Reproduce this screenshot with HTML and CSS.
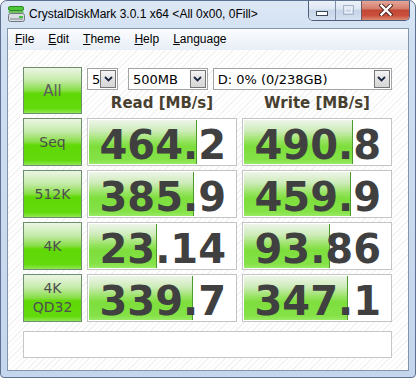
FILE: index.html
```html
<!DOCTYPE html>
<html lang="en">
<head>
  <meta charset="UTF-8" />
  <meta name="viewport" content="width=device-width, initial-scale=1.0" />
  <title>CrystalDiskMark 3.0.1 x64</title>
  <link rel="stylesheet" href="styles.css">
</head>
<body>
  <div class="window">
    <div class="titlebar">
      <svg class="app-icon" width="17" height="18" viewBox="0 0 17 18">
        <rect x="0.5" y="1.5" width="15" height="4" rx="1.5" fill="#4cc63a" stroke="#2f8a25"/>
        <rect x="0.5" y="6" width="15" height="2" fill="#6fc060"/>
        <rect x="0.5" y="8.5" width="16" height="8" rx="2" fill="#d9dde2" stroke="#6f7880"/>
        <rect x="2" y="13" width="13" height="2" fill="#a9b1b9"/>
        <rect x="11" y="11" width="4" height="2" fill="#3cc43a"/>
      </svg>
      <span class="title">CrystalDiskMark 3.0.1 x64 &lt;All 0x00, 0Fill&gt;</span>
      <div class="controls">
        <div class="ctl ctl-min">
          <svg width="12" height="5" viewBox="0 0 12 5"><rect x="0.5" y="0.5" width="11" height="4" fill="#fff" stroke="#3b4658"/></svg>
        </div>
        <div class="ctl ctl-max">
          <svg width="11" height="10" viewBox="0 0 11 10"><rect x="0.5" y="0.5" width="10" height="9" fill="none" stroke="#a6b4c6"/><rect x="2.5" y="3" width="6" height="4.5" fill="none" stroke="#eef2f8"/></svg>
        </div>
        <div class="ctl ctl-close">
          <svg width="14" height="12" viewBox="0 0 14 12">
            <path d="M2.5 1.5 L11.5 10.5 M11.5 1.5 L2.5 10.5" stroke="#4a2320" stroke-width="4.2" stroke-linecap="square"/>
            <path d="M2.5 1.5 L11.5 10.5 M11.5 1.5 L2.5 10.5" stroke="#fff" stroke-width="2.4" stroke-linecap="square"/>
          </svg>
        </div>
      </div>
    </div>

    <div class="frame">
      <div class="menubar">
        <span class="menu"><u>F</u>ile</span>
        <span class="menu"><u>E</u>dit</span>
        <span class="menu"><u>T</u>heme</span>
        <span class="menu"><u>H</u>elp</span>
        <span class="menu"><u>L</u>anguage</span>
      </div>

      <div class="client">
        <div class="board">
          <div class="label label-all">All</div>
          <div class="head">
            <div class="combos">
              <div class="combo combo-count"><span>5</span><i class="arrow"><svg width="9" height="6" viewBox="0 0 9 6"><polyline points="1,1 4.5,4.5 8,1" fill="none" stroke="#1b2740" stroke-width="1.8"/></svg></i></div>
              <div class="combo combo-size"><span>500MB</span><i class="arrow"><svg width="9" height="6" viewBox="0 0 9 6"><polyline points="1,1 4.5,4.5 8,1" fill="none" stroke="#1b2740" stroke-width="1.8"/></svg></i></div>
              <div class="combo combo-drive"><span>D: 0% (0/238GB)</span><i class="arrow"><svg width="9" height="6" viewBox="0 0 9 6"><polyline points="1,1 4.5,4.5 8,1" fill="none" stroke="#1b2740" stroke-width="1.8"/></svg></i></div>
            </div>
            <div class="heads">
              <div class="col-title">Read [MB/s]</div>
              <div class="col-title">Write [MB/s]</div>
            </div>
          </div>

          <div class="label">Seq</div>
          <div class="cell" style="--w:108px"><span class="num">464.2</span></div>
          <div class="cell" style="--w:109px"><span class="num">490.8</span></div>

          <div class="label">512K</div>
          <div class="cell" style="--w:105px"><span class="num">385.9</span></div>
          <div class="cell" style="--w:107px"><span class="num">459.9</span></div>

          <div class="label">4K</div>
          <div class="cell" style="--w:68px"><span class="num">23.14</span></div>
          <div class="cell" style="--w:86px"><span class="num">93.86</span></div>

          <div class="label label-2">4K<br>QD32</div>
          <div class="cell" style="--w:104px"><span class="num">339.7</span></div>
          <div class="cell" style="--w:104px"><span class="num">347.1</span></div>
        </div>
        <div class="status"></div>
      </div>
    </div>
  </div>
</body>
</html>
```

FILE: styles.css
```css
html, body {
  margin: 0;
  background: #fff;
}
.window {
  width: 416px;
  height: 378px;
  box-sizing: border-box;
  border: 1px solid #5f7190;
  border-radius: 7px 7px 4px 4px;
  padding: 0 6px 6px 6px;
  background: linear-gradient(#dde8f6 0, #d0dff2 40px, #c4d6ed 100%);
  display: flex;
  flex-direction: column;
  font-family: "Liberation Sans", Arial, sans-serif;
  overflow: hidden;
}

/* title bar */
.titlebar {
  height: 27px;
  display: flex;
  align-items: flex-start;
}
.app-icon {
  margin: 4px 0 0 1px;
}
.title {
  margin: 6px 0 0 4px;
  font-size: 12px;
  line-height: 15px;
  color: #000;
  white-space: nowrap;
}
.controls {
  margin: -1px -1px 0 auto;
  display: flex;
  height: 20px;
  border: 1px solid #4d5e7a;
  border-top: none;
  border-radius: 0 0 5px 5px;
  overflow: hidden;
}
.ctl {
  display: flex;
  align-items: center;
  justify-content: center;
  box-sizing: border-box;
}
.ctl-min {
  width: 27px;
  padding-top: 6px;
  background: linear-gradient(#eef3fa, #dde7f3 45%, #c6d5e8 52%, #d4e1f0);
  border-right: 1px solid #7f8ea6;
}
.ctl-max {
  width: 26px;
  background: linear-gradient(#eef3fa, #dde7f3 45%, #c6d5e8 52%, #d4e1f0);
  border-right: 1px solid #6d5a62;
}
.ctl-close {
  width: 47px;
  background: linear-gradient(#e7aa9c, #d5806f 42%, #c34634 52%, #c9503d 78%, #dc8a74);
}

/* client frame */
.frame {
  flex: 1;
  display: flex;
  flex-direction: column;
  border: 1px solid #8494ad;
}
.menubar {
  height: 21px;
  display: flex;
  background: linear-gradient(#fbfcfe, #e8eef7);
}
.menu {
  padding: 0 7px;
  font-size: 12px;
  line-height: 21px;
  color: #000;
}
.menu u {
  text-decoration-thickness: 1px;
}
.client {
  flex: 1;
  padding: 17px 0 0 15px;
  background: repeating-linear-gradient(135deg, #fff 0 3px, #f2f2f2 3px 4px);
}

.board {
  display: grid;
  grid-template-columns: 59px 150px 150px;
  grid-template-rows: 47px repeat(4, 48px);
  column-gap: 5px;
  row-gap: 4px;
}

.label {
  box-sizing: border-box;
  border: 1px solid #6f8e6f;
  background: linear-gradient(#ebf6e3 0%, #c4eaa8 28%, #86de44 50%, #5fd806 57%, #63da0c 90%, #8fe852 100%);
  display: flex;
  align-items: center;
  justify-content: center;
  text-align: center;
  font-family: "DejaVu Sans", Verdana, sans-serif;
  font-size: 14px;
  color: #4e4e4e;
}
.label-all {
  font-size: 15px;
  color: #5e5e5e;
}
.label-2 {
  line-height: 19px;
}

.head {
  grid-column: 2 / 4;
  display: flex;
  flex-direction: column;
}
.combos {
  display: flex;
  margin-top: 1px;
  height: 22px;
}
.combo {
  box-sizing: border-box;
  height: 22px;
  border: 1px solid #a4a4a4;
  background: #fff;
  display: flex;
  align-items: center;
  font-family: "DejaVu Sans", Verdana, sans-serif;
  font-size: 13px;
  color: #000;
}
.combo span {
  flex: 1;
  padding-left: 4px;
  white-space: nowrap;
}
.combo-count { width: 31px; }
.combo-size { width: 80px; margin-left: 10px; }
.combo-drive { width: 180px; margin-left: 5px; }
.arrow {
  box-sizing: border-box;
  width: 16px;
  height: 18px;
  margin-right: 1px;
  border: 1px solid #777;
  background: linear-gradient(#f5f5f5, #e2e2e2 50%, #d6d6d6);
  display: flex;
  align-items: center;
  justify-content: center;
}
.heads {
  display: grid;
  grid-template-columns: 150px 150px;
  column-gap: 5px;
  padding-top: 4px;
}
.col-title {
  text-align: center;
  font-family: "DejaVu Sans", Verdana, sans-serif;
  font-weight: bold;
  font-size: 15px;
  line-height: 18px;
  color: #48402f;
}

.cell {
  position: relative;
  box-sizing: border-box;
  border: 1px solid #c4c4c4;
  padding: 7px 1px 0 1px;
  background: #fff;
}
.cell::before {
  content: "";
  position: absolute;
  left: 1px;
  top: 1px;
  bottom: 1px;
  width: var(--w);
  box-sizing: border-box;
  border-right: 1px solid #4b9a2b;
  background: linear-gradient(#eef5e9 0%, #cdebb8 25%, #95e35f 48%, #7ede3c 60%, #84e247 90%, #98e964 100%);
}
.num {
  position: relative;
  display: block;
  padding-right: 9px;
  text-align: right;
  font-family: "DejaVu Sans", Verdana, sans-serif;
  font-weight: bold;
  font-size: 40px;
  line-height: 39px;
  color: #404040;
}

.status {
  width: 369px;
  height: 27px;
  box-sizing: border-box;
  margin-top: 9px;
  border: 1px solid #c6c6c6;
  background: #fff;
}
```
